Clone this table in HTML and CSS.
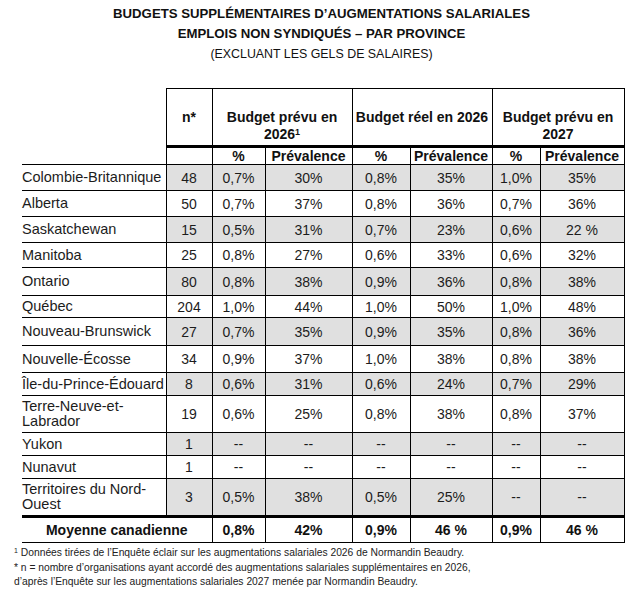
FILE: index.html
```html
<!DOCTYPE html>
<html lang="fr">
<head>
    <meta charset="UTF-8">
    <title>Budgets supplémentaires d'augmentations salariales</title>
    <link rel="stylesheet" href="styles.css">
</head>
<body>

<div class="title">
    <div class="title-main">BUDGETS SUPPLÉMENTAIRES D’AUGMENTATIONS SALARIALES</div>
    <div class="title-main">EMPLOIS NON SYNDIQUÉS – PAR PROVINCE</div>
    <div class="title-sub">(EXCLUANT LES GELS DE SALAIRES)</div>
</div>

<table class="budget-table">
    <colgroup>
        <col class="c-name"><col class="c-n">
        <col class="c-p1"><col class="c-v1">
        <col class="c-p2"><col class="c-v2">
        <col class="c-p3"><col class="c-v3">
    </colgroup>
    <thead>
        <tr class="head">
            <th class="blank"></th>
            <th>n*</th>
            <th colspan="2">Budget prévu en<br>2026<sup>1</sup></th>
            <th colspan="2" class="nowrap">Budget réel en 2026</th>
            <th colspan="2">Budget prévu en<br>2027</th>
        </tr>
        <tr class="sub">
            <th class="blank-side"></th>
            <th></th>
            <th>%</th><th>Prévalence</th>
            <th>%</th><th>Prévalence</th>
            <th>%</th><th>Prévalence</th>
        </tr>
    </thead>
    <tbody>
        <tr class="shade r-col"><td>Colombie-Britannique</td><td>48</td><td>0,7%</td><td>30%</td><td>0,8%</td><td>35%</td><td>1,0%</td><td>35%</td></tr>
        <tr class="r-alb"><td>Alberta</td><td>50</td><td>0,7%</td><td>37%</td><td>0,8%</td><td>36%</td><td>0,7%</td><td>36%</td></tr>
        <tr class="shade r-sask"><td>Saskatchewan</td><td>15</td><td>0,5%</td><td>31%</td><td>0,7%</td><td>23%</td><td>0,6%</td><td>22 %</td></tr>
        <tr class="r-man"><td>Manitoba</td><td>25</td><td>0,8%</td><td>27%</td><td>0,6%</td><td>33%</td><td>0,6%</td><td>32%</td></tr>
        <tr class="shade r-ont"><td>Ontario</td><td>80</td><td>0,8%</td><td>38%</td><td>0,9%</td><td>36%</td><td>0,8%</td><td>38%</td></tr>
        <tr class="r-que"><td>Québec</td><td>204</td><td>1,0%</td><td>44%</td><td>1,0%</td><td>50%</td><td>1,0%</td><td>48%</td></tr>
        <tr class="shade r-nb"><td>Nouveau-Brunswick</td><td>27</td><td>0,7%</td><td>35%</td><td>0,9%</td><td>35%</td><td>0,8%</td><td>36%</td></tr>
        <tr class="r-ne"><td>Nouvelle-Écosse</td><td>34</td><td>0,9%</td><td>37%</td><td>1,0%</td><td>38%</td><td>0,8%</td><td>38%</td></tr>
        <tr class="shade r-ipe"><td>Île-du-Prince-Édouard</td><td>8</td><td>0,6%</td><td>31%</td><td>0,6%</td><td>24%</td><td>0,7%</td><td>29%</td></tr>
        <tr class="r-tall"><td>Terre-Neuve-et-<br>Labrador</td><td>19</td><td>0,6%</td><td>25%</td><td>0,8%</td><td>38%</td><td>0,8%</td><td>37%</td></tr>
        <tr class="shade r-small"><td>Yukon</td><td>1</td><td>--</td><td>--</td><td>--</td><td>--</td><td>--</td><td>--</td></tr>
        <tr class="r-small"><td>Nunavut</td><td>1</td><td>--</td><td>--</td><td>--</td><td>--</td><td>--</td><td>--</td></tr>
        <tr class="shade r-tall"><td>Territoires du Nord-<br>Ouest</td><td>3</td><td>0,5%</td><td>38%</td><td>0,5%</td><td>25%</td><td>--</td><td>--</td></tr>
    </tbody>
    <tfoot>
        <tr class="total">
            <td colspan="2">Moyenne canadienne</td>
            <td>0,8%</td><td>42%</td><td>0,9%</td><td>46 %</td><td>0,9%</td><td>46 %</td>
        </tr>
    </tfoot>
</table>

<div class="notes">
    <p><sup>1</sup> Données tirées de l’Enquête éclair sur les augmentations salariales 2026 de Normandin Beaudry.</p>
    <p>* n = nombre d’organisations ayant accordé des augmentations salariales supplémentaires en 2026,</p>
    <p>d’après l’Enquête sur les augmentations salariales 2027 menée par Normandin Beaudry.</p>
</div>

</body>
</html>
```

FILE: styles.css
```css
body { margin: 0; background: #fff; color: #111; font-family: "Liberation Sans", Arial, sans-serif; }

.title { text-align: center; padding-top: 4px; padding-left: 2px; }
.title-main { font-weight: bold; font-size: 13.2px; line-height: 20px; color: #111; }
.title-sub { font-size: 12.4px; line-height: 20px; color: #111; }

/* Table */
.budget-table { border-collapse: collapse; margin: 24px 0 0 22px; table-layout: fixed; width: 602px; font-size: 14px; }
.c-name { width: 144px; }
.c-n { width: 46px; }
.c-p1 { width: 53px; }
.c-v1 { width: 87px; }
.c-p2 { width: 58px; }
.c-v2 { width: 82px; }
.c-p3 { width: 48px; }
.c-v3 { width: 84px; }

.budget-table th, .budget-table td { border: 1px solid #000; padding: 0 2px; text-align: center; }
.budget-table th { font-weight: bold; color: #111; }
.budget-table td { color: #1c1c1c; }
.budget-table td:first-child { text-align: left; border-left: none; padding: 0; line-height: 15px; font-size: 14.5px; white-space: nowrap; }

.head th { height: 36px; vertical-align: top; padding-top: 20px; line-height: 17px; border-bottom: 3px solid #000; }
.head th.blank { border: none; border-bottom: none; }
.head sup { font-size: 9px; vertical-align: top; position: relative; top: -2px; }
.nowrap { white-space: nowrap; }

.sub th { height: 16px; line-height: 16px; }
.sub th.blank-side { border-left: none; border-top: none; }

.shade td { background: #e0e0e0; }
.shade td:first-child { background: #fff; }

/* row heights follow the source document */
.r-col td { height: 25px; }
.r-alb td { height: 25px; }
.r-sask td { height: 25px; }
.r-man td { height: 24px; }
.r-ont td { height: 27px; }
.r-que td { height: 21px; }
.r-nb td { height: 27px; }
.r-ne td { height: 26px; }
.r-ipe td { height: 22px; }
.r-tall td { height: 36px; }
.r-small td { height: 22px; }

.total td { height: 24px; font-weight: bold; color: #111; border-top: 3px solid #000; }
.budget-table .total td:first-child { text-align: center; font-size: 14px; }

/* Footnotes */
.notes { margin: 3px 0 0 14px; font-size: 10.3px; line-height: 14.5px; color: #222; }
.notes p { margin: 0; }
.notes sup { font-size: 7px; vertical-align: top; position: relative; top: -2px; }
```
